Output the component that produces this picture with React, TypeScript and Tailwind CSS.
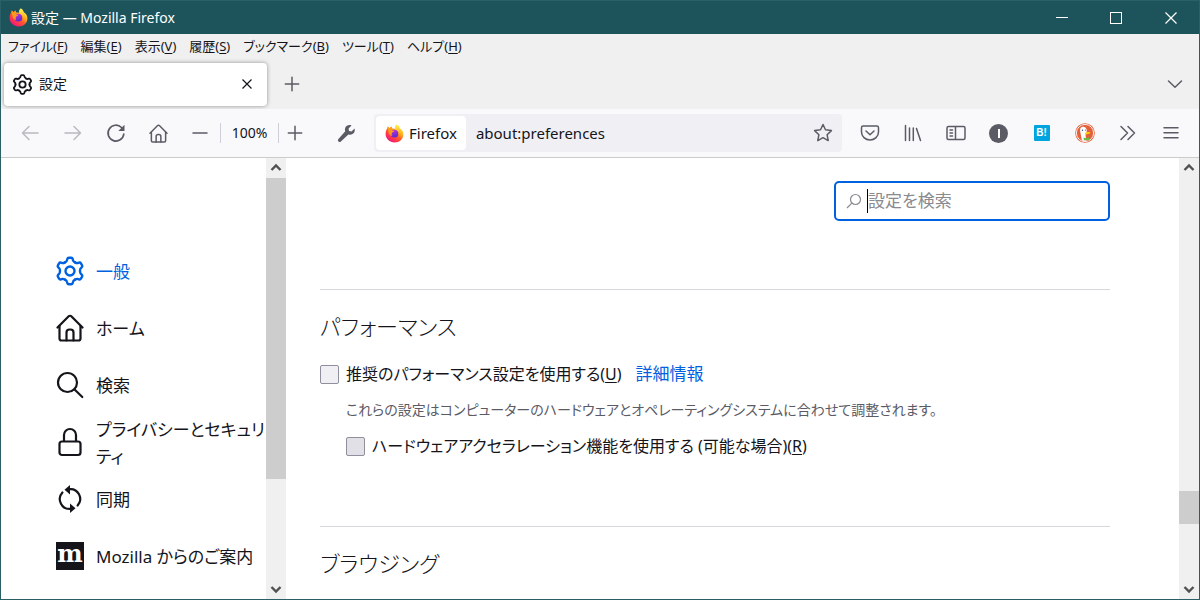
import React from "react";

interface IconProps {
  className?: string;
  strokeWidth?: number;
}

interface NavItem {
  label: string;
  icon: React.ReactNode;
  active?: boolean;
}

const FirefoxLogo: React.FC<IconProps> = ({ className = "" }) => (
  <svg viewBox="0 0 32 32" className={className} aria-hidden="true">
    <defs>
      <linearGradient id="fxBody" x1="0.85" y1="0.1" x2="0.2" y2="0.95">
        <stop offset="0" stopColor="#fff44f" />
        <stop offset="0.3" stopColor="#ffb11f" />
        <stop offset="0.55" stopColor="#ff5a2a" />
        <stop offset="0.8" stopColor="#ff2f55" />
        <stop offset="1" stopColor="#e31587" />
      </linearGradient>
      <linearGradient id="fxGlobe" x1="0.3" y1="0" x2="0.6" y2="1">
        <stop offset="0" stopColor="#b833e1" />
        <stop offset="1" stopColor="#592acb" />
      </linearGradient>
      <linearGradient id="fxTail" x1="0.5" y1="0" x2="0.5" y2="1">
        <stop offset="0" stopColor="#fff44f" />
        <stop offset="1" stopColor="#ff980e" />
      </linearGradient>
    </defs>
    <path
      d="M20 1c2.600 1.800 4.300 4.300 4.700 6.400 1-.200 2 .600 2.500 1.600C29.600 11.300 31 14.500 31 17.500 31 25.200 24.500 31 16.200 31 7.800 31 1 24.800 1 16.800c0-4.300 1.300-7.300 3-9.600L4.700 4l2.800 3 3.200-3 1 3.300c2 .100 3.500.400 4.900 1C16.600 5 18 2.800 20 1z"
      fill="url(#fxBody)"
    />
    <circle cx="15.800" cy="16.300" r="6.500" fill="url(#fxGlobe)" />
    <path d="M4 7.200 4.700 4l2.800 3 3.200-3 1 3.300c-1 1.800-.8 3.200.4 3.700l3.600.3c-.5 1.700-2.600 2.300-3.600 3.200-1.200 1.200-1.400 3.600.2 5.200-3 .5-5.800-2-6.300-5.200C5.600 12 5 9 4 7.200z" fill="#ff9a1c" />
    <path d="M20 1c2.600 1.800 4.300 4.300 4.700 6.400 3 4 3.400 9.600.8 13.600.3-4.500-1.500-8-5.500-10.500-2-1.200-3.400-1.800-3.400-2.700C16.800 5 18 2.800 20 1z" fill="url(#fxTail)" />
  </svg>
);

const toothAngles = [0, 60, 120, 180, 240, 300];

const GearIcon: React.FC<IconProps> = ({ className = "", strokeWidth = 2.4 }) => (
  <svg viewBox="-15 -15 30 30" className={className} fill="none" stroke="currentColor" strokeWidth={strokeWidth} strokeLinecap="round" aria-hidden="true">
    {toothAngles.map((angle) => (
      <path
        key={angle}
        transform={`rotate(${angle})`}
        d="M-5-8.660C-3.800-9.350-3.200-9.800-3-10.800L-2.700-12Q-2.400-13.300-1.200-13.300H1.200Q2.400-13.300 2.700-12L3-10.800C3.200-9.800 3.800-9.350 5-8.660"
      />
    ))}
    <circle r="4.500" />
  </svg>
);

const HomeIcon: React.FC<IconProps> = ({ className = "", strokeWidth = 2.2 }) => (
  <svg viewBox="0 0 28 28" className={className} fill="none" stroke="currentColor" strokeWidth={strokeWidth} strokeLinecap="round" strokeLinejoin="round" aria-hidden="true">
    <path d="M1.500 13.500 12.700 2.300a1.800 1.800 0 0 1 2.600 0L26.500 13.500" />
    <path d="M3.500 12v12.500A2 2 0 0 0 5.500 26.500h17a2 2 0 0 0 2-2V12" />
    <path d="M10.500 26.500V18.500a3 3 0 0 1 3-3h1a3 3 0 0 1 3 3V26.500" />
  </svg>
);

const MagnifierIcon: React.FC<IconProps> = ({ className = "" }) => (
  <svg viewBox="0 0 28 28" className={className} fill="none" stroke="currentColor" strokeWidth="2.200" strokeLinecap="round" aria-hidden="true">
    <circle cx="11.500" cy="11.500" r="9.500" />
    <path d="m18.300 18.300 8 7.700" />
  </svg>
);

const LockIcon: React.FC<IconProps> = ({ className = "" }) => (
  <svg viewBox="0 0 28 30" className={className} fill="none" stroke="currentColor" strokeWidth="2.200" aria-hidden="true">
    <rect x="3.500" y="14.500" width="21" height="13.500" rx="2.500" />
    <path d="M8 14.500V8a6 6 0 0 1 12 0v6.500" />
  </svg>
);

const SyncIcon: React.FC<IconProps> = ({ className = "" }) => (
  <svg viewBox="0 0 28 28" className={className} fill="none" stroke="currentColor" strokeWidth="2.200" strokeLinecap="round" aria-hidden="true">
    <path d="M13 4.200A9.800 9.800 0 0 1 21.600 20.500" />
    <path d="M15 23.800A9.800 9.800 0 0 1 6.400 7.500" />
    <path d="M14 0v9.500L8.500 4.700zM14 18.500v9.500l5.500-4.800z" fill="currentColor" stroke="none" />
  </svg>
);

const DuckIcon = () => (
  <svg viewBox="0 0 20 20" className="size-5" aria-hidden="true">
    <circle cx="10" cy="10" r="9.800" fill="#e2603a" />
    <circle cx="10" cy="10" r="8.600" fill="none" stroke="#fff" strokeWidth="0.900" />
    <path d="M6.300 4.200C8.500 3 11.300 4.300 11.800 7c.3 2-.9 3.200-1.200 4.500-.2 2 .5 3.500 1 6-2 .6-3.500.5-4.700 0C6.400 14.500 5.600 11 5.200 8.500 5 6.500 5 5 6.300 4.200z" fill="#fff" />
    <path d="M10.200 9.800c1.500-.9 3.800-.9 5.300-.3-1 1.500-3.300 2-5.300 1.900z" fill="#fdd20a" />
    <path d="M8.500 14.500l2.700.8 2.800-1v3.200l-2.800-.8-2.200.8z" fill="#65bc46" />
    <circle cx="7.500" cy="7.300" r=".7" fill="#2d4f8e" />
    <circle cx="10.500" cy="7" r=".6" fill="#2d4f8e" />
  </svg>
);

const MozillaBadge = () => (
  <span className="flex size-7 items-center justify-center bg-[#15141a] pb-1 font-['DejaVu_Serif',serif] text-2xl leading-6 font-bold text-white">
    m
  </span>
);

const menus = [
  { label: "ファイル", accessKey: "F" },
  { label: "編集", accessKey: "E" },
  { label: "表示", accessKey: "V" },
  { label: "履歴", accessKey: "S" },
  { label: "ブックマーク", accessKey: "B" },
  { label: "ツール", accessKey: "T" },
  { label: "ヘルプ", accessKey: "H" },
];

const navItems: NavItem[] = [
  { label: "一般", icon: <GearIcon className="size-[30px] shrink-0" />, active: true },
  { label: "ホーム", icon: <HomeIcon className="size-7" /> },
  { label: "検索", icon: <MagnifierIcon className="size-7" /> },
  { label: "プライバシーとセキュリティ", icon: <LockIcon className="h-[30px] w-7" /> },
  { label: "同期", icon: <SyncIcon className="size-7" /> },
  { label: "Mozilla からのご案内", icon: <MozillaBadge /> },
];

const ToolButton: React.FC<{ label: string; className?: string; children: React.ReactNode }> = ({
  label,
  className = "w-[43px] text-[#5b5b66]",
  children,
}) => (
  <button aria-label={label} className={`flex h-9 shrink-0 items-center justify-center ${className}`}>
    {children}
  </button>
);

/** Thin line icon on a 20px grid, used all over the toolbar */
const LineIcon: React.FC<{ d: string; className?: string }> = ({ d, className = "size-5" }) => (
  <svg viewBox="0 0 20 20" className={className} fill="none" stroke="currentColor" strokeWidth="1.500" strokeLinecap="round" strokeLinejoin="round" aria-hidden="true">
    <path d={d} />
  </svg>
);

const ScrollArrow: React.FC<{ d: string }> = ({ d }) => (
  <svg viewBox="0 0 20 20" className="size-5 shrink-0" fill="none" stroke="#505050" strokeWidth="2.400" aria-hidden="true">
    <path d={d} />
  </svg>
);

const Scrollbar: React.FC<{ children: React.ReactNode }> = ({ children }) => (
  <div className="flex w-5 shrink-0 flex-col bg-[#f0f0f0]">
    <ScrollArrow d="M5.500 12 10 7.500l4.500 4.500" />
    <div className="flex min-h-0 flex-1 flex-col">{children}</div>
    <ScrollArrow d="M5.500 8 10 12.500 14.500 8" />
  </div>
);

const TitleBar = () => (
  <header className="flex h-[33px] shrink-0 items-center bg-[#1d545c] pl-2 text-white">
    <FirefoxLogo className="size-[19px]" />
    <h1 className="ml-[3px] flex-1 text-sm">設定 — Mozilla Firefox</h1>
    <button aria-label="最小化" className="flex h-8 w-[55px] items-center justify-center">
      <span className="h-px w-3 bg-white" />
    </button>
    <button aria-label="最大化" className="flex h-8 w-[54px] items-center justify-center">
      <span className="size-3 border border-white" />
    </button>
    <button aria-label="閉じる" className="flex h-8 w-[56px] items-center justify-center">
      <svg viewBox="0 0 12 12" className="size-3" stroke="currentColor" strokeWidth="1.200" aria-hidden="true">
        <path d="M.5.500l11 11M11.500.500l-11 11" />
      </svg>
    </button>
  </header>
);

const TabStrip = () => (
  <div className="flex h-[50px] shrink-0 items-center pr-3 pl-[3px] text-[#5b5b66]">
    <div className="flex h-[43px] w-[263px] items-center rounded bg-white pr-3 pl-2 text-[#15141a] shadow-[0_0_4px_rgba(0,0,0,0.4)]">
      <GearIcon className="size-[21px]" strokeWidth={2.6} />
      <span className="ml-[6px] flex-1 text-sm">設定</span>
      <button aria-label="タブを閉じる" className="flex size-4 items-center justify-center">
        <svg viewBox="0 0 10 10" className="size-[10px]" stroke="currentColor" strokeWidth="1.200" aria-hidden="true">
          <path d="M.5.500l9 9M9.500.500l-9 9" />
        </svg>
      </button>
    </div>
    <button aria-label="新しいタブ" className="ml-[15px] flex size-5 items-center justify-center">
      <LineIcon d="M10 3.300v13.400M3.300 10h13.400" />
    </button>
    <button aria-label="タブを一覧表示" className="ml-auto flex size-6 items-center justify-center">
      <LineIcon d="M3.500 7 10 13.200 16.500 7" />
    </button>
  </div>
);

const Toolbar = () => (
  <div className="flex h-[49px] shrink-0 items-center border-b border-[#cccccc] bg-[#f9f9fb] pr-[7px] pl-[7px]">
    <ToolButton label="戻る" className="w-[43px] text-[#b9b9bf]">
      <LineIcon d="M18 10H2.500M9 3.500 2.500 10 9 16.500" />
    </ToolButton>
    <ToolButton label="進む" className="w-[43px] text-[#b9b9bf]">
      <LineIcon d="M2 10h15.500M11 3.500 17.500 10 11 16.500" />
    </ToolButton>
    <ToolButton label="再読み込み">
      <svg viewBox="0 0 20 20" className="size-5" fill="none" stroke="currentColor" strokeWidth="1.700" strokeLinecap="round" aria-hidden="true">
        <path d="M17.800 11A7.900 7.900 0 1 1 15.500 4.500" />
        <path d="M18.500 1.800V7.500a.5.500 0 0 1-.5.500H12.300z" fill="currentColor" stroke="none" />
      </svg>
    </ToolButton>
    <ToolButton label="ホーム">
      <HomeIcon className="size-[19px]" />
    </ToolButton>
    <ToolButton label="縮小" className="w-10 text-[#5b5b66]">
      <LineIcon d="M3 10h14" />
    </ToolButton>
    <button className="h-5 w-[59px] border-x border-[#cfcfd8] text-center text-sm leading-5 text-[#15141a]">100%</button>
    <ToolButton label="拡大" className="w-8 text-[#5b5b66]">
      <LineIcon d="M10 3.300v13.400M3.300 10h13.400" />
    </ToolButton>
    <ToolButton label="開発ツール" className="ml-[14px] w-[43px] text-[#5b5b66]">
      <svg viewBox="0 0 20 20" className="size-[19px]" fill="currentColor" aria-hidden="true">
        <path d="M18.400 4.800 15.300 7.800 12.600 7.300 12.200 4.700 15.300 1.600C12.800.500 9.800 1.300 8.700 4 8.200 5.300 8.300 6.500 8.700 7.700L1.500 15.700C.800 16.500.800 17.700 1.500 18.400s1.800.700 2.600-.100L12 11c1.200.500 2.600.500 3.800-.100C18.400 9.900 19.300 7.200 18.400 4.800z" />
      </svg>
    </ToolButton>
    <div className="ml-[6px] flex h-[38px] min-w-0 flex-1 items-center rounded bg-[#f0f0f4] p-[2px] text-[#15141a]">
      <button className="flex h-[34px] items-center gap-[5px] rounded bg-white px-[9px] text-[15px]">
        <FirefoxLogo className="size-[19px]" />
        Firefox
      </button>
      <input aria-label="アドレス" defaultValue="about:preferences" className="min-w-0 flex-1 bg-transparent pl-[10px] text-[15px] outline-none" />
      <button aria-label="ブックマークに追加" className="mr-[7px] text-[#5b5b66]">
        <LineIcon d="m10 1.500 2.500 5.300 5.900.800-4.300 4.100 1.100 5.900-5.200-2.900-5.200 2.900 1.100-5.900L1.600 7.600l5.900-.800z" />
      </button>
    </div>
    <div className="ml-[6px] flex">
      <ToolButton label="Pocket">
        <LineIcon d="M3.200 3h13.600a1.700 1.700 0 0 1 1.700 1.700V9a8.500 8 0 0 1-17 0V4.700A1.700 1.700 0 0 1 3.200 3zM6 8l4 3.700L14 8" />
      </ToolButton>
      <ToolButton label="ライブラリ">
        <LineIcon d="M2.500 2.500v15M6.500 5v12.500M10.300 5v12.500M13.500 5.500l4 12" />
      </ToolButton>
      <ToolButton label="サイドバー">
        <LineIcon d="M2.500 3.500h15a1.500 1.500 0 0 1 1.500 1.500v10a1.500 1.500 0 0 1-1.500 1.500h-15A1.500 1.500 0 0 1 1 15V5a1.500 1.500 0 0 1 1.500-1.500zM9.500 3.500v13M4 7h2.500M4 10h2.500M4 13h2.500" />
      </ToolButton>
      <ToolButton label="Instapaper">
        <span className="flex size-[19px] items-center justify-center rounded-full bg-[#5b5b66]">
          <span className="h-[9px] w-[2px] bg-white" />
        </span>
      </ToolButton>
      <ToolButton label="はてなブックマーク">
        <span className="flex size-4 items-center justify-center rounded-[1px] bg-[#00a4de] font-['Liberation_Sans',sans-serif] text-[10px] leading-4 font-bold text-white">
          B!
        </span>
      </ToolButton>
      <ToolButton label="DuckDuckGo">
        <DuckIcon />
      </ToolButton>
      <ToolButton label="その他のツール">
        <LineIcon d="M3 3.500 9.500 10 3 16.500M10 3.500l6.500 6.500-6.500 6.500" />
      </ToolButton>
      <ToolButton label="メニュー">
        <LineIcon d="M3 4.700h14M3 9.700h14M3 14.700h14" />
      </ToolButton>
    </div>
  </div>
);

const Sidebar = () => (
  <nav className="w-[265px] shrink-0 overflow-hidden pt-[84px] pl-[54px]">
    {navItems.map((item) => (
      <a
        key={item.label}
        href="#"
        className={`flex h-[57px] items-center text-[17px] leading-[27px] ${item.active ? "text-[#0061e0]" : "text-[#15141a]"}`}
      >
        <span className="flex w-[30px] shrink-0 justify-center">{item.icon}</span>
        <span className="ml-[11px] w-[170px] shrink-0 pt-[2px]">{item.label}</span>
      </a>
    ))}
  </nav>
);

const Preferences = () => (
  <main className="min-w-0 flex-1 overflow-hidden pt-[23px] pr-[69px] pl-[34px] text-[#15141a]">
    <div className="ml-auto flex h-10 w-[276px] items-center rounded-[5px] border-2 border-[#0061e0] pl-[10px]">
      <svg viewBox="0 0 16 16" className="size-4 text-[#8a8a8f]" fill="none" stroke="currentColor" strokeWidth="1.200" aria-hidden="true">
        <circle cx="9.500" cy="6.500" r="5" />
        <path d="M5.800 10.200 1 15" />
      </svg>
      <span className="ml-[5px] h-6 w-px bg-black" />
      <input type="search" aria-label="設定を検索" placeholder="設定を検索" className="min-w-0 flex-1 text-[17px] outline-none placeholder:text-[#8a8a8f]" />
    </div>

    <section className="mt-[68px] h-[237px] border-t border-[#d7d7db] pt-[18px]">
      <h2 className="text-[22px] leading-9 font-light">パフォーマンス</h2>
      <div className="mt-4 flex h-7 items-center text-base">
        <input id="recommended" type="checkbox" className="size-[19px] appearance-none rounded-[2px] border border-[#8f8f9d] bg-[#f0f0f4]" />
        <label htmlFor="recommended" className="ml-[7px]">
          推奨のパフォーマンス設定を使用する(<u className="underline-offset-2">U</u>)
        </label>
        <a href="#" className="ml-[14px] text-[17px] text-[#0061e0]">詳細情報</a>
      </div>
      <p className="mt-[10px] pl-[26px] text-sm leading-6 text-[#5b5b66]">
        これらの設定はコンピューターのハードウェアとオペレーティングシステムに合わせて調整されます。
      </p>
      <div className="mt-[10px] flex h-7 items-center pl-[26px] text-base">
        <input id="hardware" type="checkbox" className="size-[19px] appearance-none rounded-[2px] border border-[#8f8f9d] bg-[#e0e0e6]" />
        <label htmlFor="hardware" className="ml-[7px]">
          ハードウェアアクセラレーション機能を使用する (可能な場合)(<u className="underline-offset-2">R</u>)
        </label>
      </div>
    </section>

    <section className="border-t border-[#d7d7db] pt-[18px]">
      <h2 className="text-[22px] leading-9 font-light">ブラウジング</h2>
    </section>
  </main>
);

export default function App() {
  return (
    <div className="flex h-screen flex-col overflow-hidden border border-[#2b5f66] bg-[#f0f0f0] font-['Noto_Sans','Noto_Sans_CJK_JP',sans-serif] [font-feature-settings:'palt']" lang="ja">
      <TitleBar />
      <div role="menubar" className="flex h-[25px] shrink-0 items-center gap-[13px] pl-[7px] text-[13px] text-[#15141a]">
        {menus.map((menu) => (
          <button key={menu.accessKey} role="menuitem">
            {menu.label}(<u className="underline-offset-2">{menu.accessKey}</u>)
          </button>
        ))}
      </div>
      <TabStrip />
      <Toolbar />
      <div className="flex min-h-0 flex-1 bg-white">
        <Sidebar />
        <Scrollbar>
          <div className="h-3/4 bg-[#cdcdcd]" />
        </Scrollbar>
        <Preferences />
        <Scrollbar>
          <div className="h-[78%]" />
          <div className="h-[33px] bg-[#cdcdcd]" />
        </Scrollbar>
      </div>
    </div>
  );
}
